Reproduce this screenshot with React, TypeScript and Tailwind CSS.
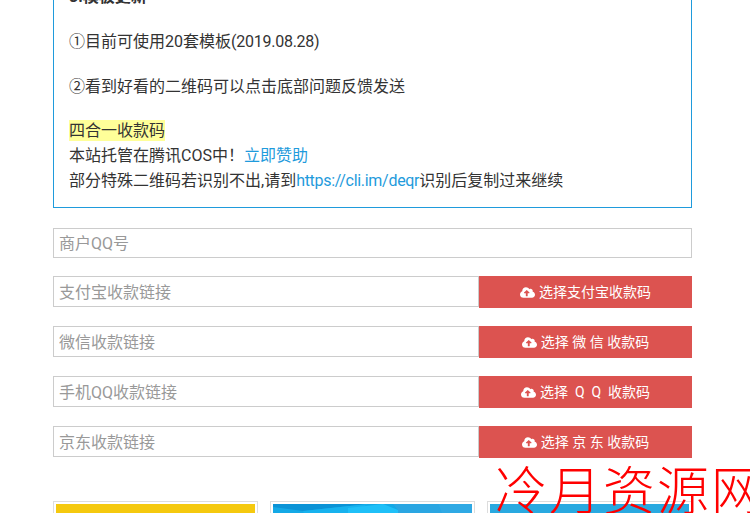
import { FaCloudUploadAlt } from "react-icons/fa";

const rows = [
  { placeholder: "支付宝收款链接", label: "选择支付宝收款码" },
  { placeholder: "微信收款链接", label: "选择 微 信 收款码" },
  { placeholder: "手机QQ收款链接", label: "选择\u00a0 Q\u00a0 Q\u00a0 收款码" },
  { placeholder: "京东收款链接", label: "选择 京 东 收款码" },
];

function UploadRow({ placeholder, label }: { placeholder: string; label: string }) {
  return (
    <div className="flex items-start mb-[18px]">
      <input
        type="text"
        placeholder={placeholder}
        className="w-[426px] h-[31px] border border-[#ccc] px-[5px] pt-[2px] text-base text-[#333] placeholder:text-[#999] outline-none"
      />
      <button className="flex-1 h-[32px] flex items-center justify-center gap-1 bg-[#dc5350] text-white text-sm">
        <FaCloudUploadAlt className="text-[15px]" />
        <span>{label}</span>
      </button>
    </div>
  );
}

export default function App() {
  return (
    <div
      className="relative h-[513px] overflow-hidden bg-white text-[#333]"
      style={{ fontFamily: 'Roboto, "Noto Sans CJK SC", sans-serif' }}
    >
      <div className="ml-[53px] w-[639px] -mt-[30px]">
        {/* notice box, top is scrolled out of view */}
        <div className="border border-[#1f9bdc] px-[15px] pt-[13px] pb-[14px] text-base leading-[25px]">
          <p className="font-bold mb-5">3.模板更新</p>
          <p className="mb-5">
            ①目前可使用20套模板<span className="tracking-[-0.25px]">(2019.08.28)</span>
          </p>
          <p className="mb-[19px]">②看到好看的二维码可以点击底部问题反馈发送</p>
          <p>
            <span className="inline-block h-[21px] leading-[21px] bg-[#ffff99]">四合一收款码</span>
          </p>
          <p>
            本站托管在腾讯COS中！<a className="text-[#1f9bdc]">立即赞助</a>
          </p>
          <p>
            部分特殊二维码若识别不出,请到<a className="text-[#1f9bdc] tracking-[-0.3px]">https://cli.im/deqr</a>识别后复制过来继续
          </p>
        </div>

        <input
          type="text"
          placeholder="商户QQ号"
          className="block w-full h-[30px] mt-5 mb-[18px] border border-[#ccc] px-[5px] text-base placeholder:text-[#999] outline-none"
        />

        {rows.map((row) => (
          <UploadRow key={row.placeholder} placeholder={row.placeholder} label={row.label} />
        ))}

        <div className="grid grid-cols-3 gap-3 mt-[43px]">
          <div className="border border-[#ddd] p-[2px]">
            <div className="h-[40px] bg-[#f5c90f]" />
          </div>
          <div className="border border-[#ddd] p-[2px]">
            <svg viewBox="0 0 199 40" preserveAspectRatio="none" className="block w-full h-[40px]">
              <rect width="199" height="40" fill="#14a9e6" />
              <polygon points="0,0 95,0 30,7 0,3" fill="#0b93d6" />
              <polygon points="30,7 95,0 75,12 32,12" fill="#17b2ee" />
              <polygon points="75,12 75,4 110,0 125,6 125,12" fill="#1fc0f8" />
              <polygon points="125,6 120,0 165,0 170,12 125,12" fill="#2aa6e2" />
              <polygon points="165,0 199,0 199,12 170,12" fill="#2fa9e4" />
            </svg>
          </div>
          <div className="border border-[#ddd] p-[2px]">
            <div className="h-[40px] bg-[#29a9e0]" />
          </div>
        </div>
      </div>

      {/* watermark over the page */}
      <div
        className="absolute left-[495px] top-[458px] whitespace-nowrap text-[52px] leading-[60px] tracking-[2px] font-light text-[#ff0000]"
        style={{ fontFamily: '"Noto Sans CJK SC", sans-serif' }}
      >
        冷月资源网
      </div>
    </div>
  );
}
